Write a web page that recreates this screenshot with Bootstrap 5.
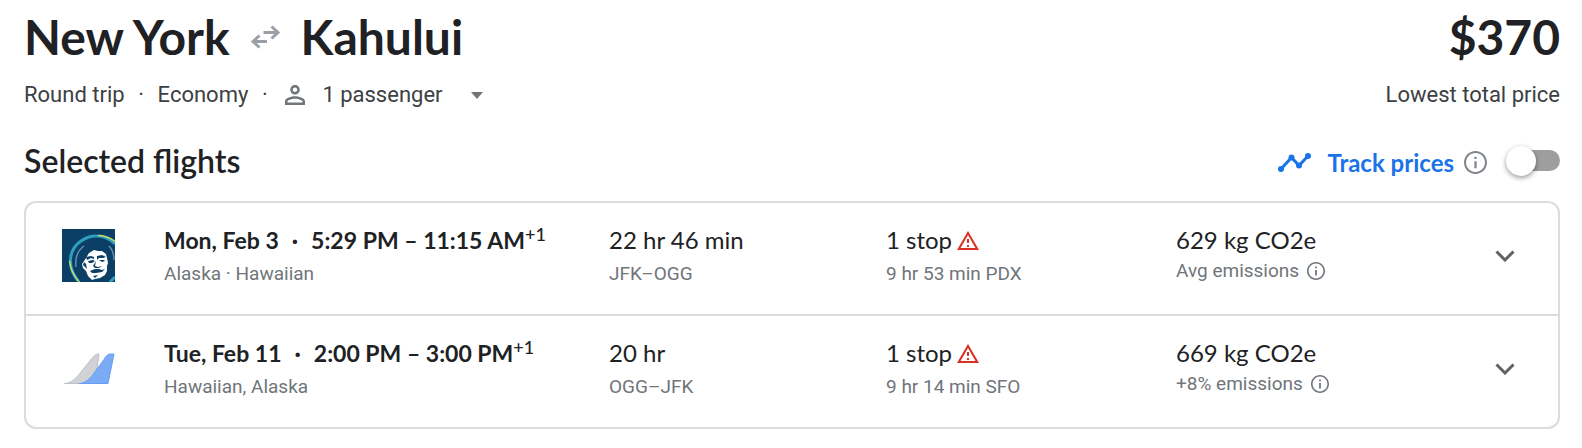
<!DOCTYPE html>
<html lang="en">
<head>
<meta charset="utf-8">
<meta name="viewport" content="width=device-width, initial-scale=1">
<title>New York to Kahului</title>
<link href="https://cdn.jsdelivr.net/npm/bootstrap@5.3.0/dist/css/bootstrap.min.css" rel="stylesheet">
<style>
  body { font-family: Roboto, sans-serif; color: #202124; background: #fff; }
  h1, h2, .price, .main-line, .track { font-family: Lato, sans-serif; }
  .page { padding: 9px 22px 18px 24px; }
  h1, .price { font-size: 48px; line-height: 56px; font-weight: 700; }
  h1 { gap: 20px; }
  h2 { font-size: 32px; line-height: 40px; font-weight: 600; }
  .trip { font-size: 22px; line-height: 32px; color: #3c4043; margin-top: 14px; }
  .dot { width: 33px; text-align: center; }
  .plain { border: 0; background: none; padding: 0; color: inherit; }
  .pax { padding-left: 4px; }
  .pax-count { margin: 0 28px 0 17px; }
  .section-head { margin: 30px 0 20px; }
  .track-row { margin-top: 3px; }
  .track { font-size: 24px; line-height: 32px; font-weight: 700; color: #1a73e8; }
  .about { margin: 0 19px 0 10px; color: #80868b; }
  .flights { border: 2px solid #dadce0; border-radius: 12px; }
  .flight { display: grid; grid-template-columns: 102px 445fr 277fr 290fr 304fr 50px; align-items: center; padding: 21px 28px 27px 36px; }
  .flight + .flight { border-top: 2px solid #dadce0; }
  .main-line { font-size: 24px; line-height: 32px; }
  .stops { gap: 5px; }
  .times { font-size: 23px; font-weight: 700; }
  .times-dot { margin: 0 13px; }
  .times sup { font-size: 18px; line-height: 1; top: -8px; font-weight: 500; }
  .sub-line { font-size: 19px; line-height: 26px; color: #70757a; margin-top: 5px; }
  .emissions .sub-line { margin: 2px 0 3px; }
  .switch { appearance: none; width: 54px; height: 30px; margin: 0 0 4px; position: relative; cursor: pointer; }
  .switch::before { content: ""; position: absolute; inset: 4px 0 5px 3px; border-radius: 11px; background: #9e9e9e; }
  .switch::after { content: ""; position: absolute; left: 0; top: 0; width: 30px; height: 30px; border-radius: 50%; background: #fff; box-shadow: 0 2px 5px rgba(0,0,0,.4); }
  .switch:checked::before { background: #8ab4f8; }
  .switch:checked::after { left: 24px; background: #1a73e8; }
  svg { display: block; flex: none; }
</style>
</head>
<body>
<svg width="0" height="0" class="d-none" aria-hidden="true">
  <symbol id="info" viewBox="2 2 20 20"><path fill="currentColor" d="M11 17h2v-6h-2v6zm1-15C6.480 2 2 6.480 2 12s4.480 10 10 10 10-4.480 10-10S17.520 2 12 2zm0 18.200c-4.530 0-8.200-3.670-8.200-8.200S7.470 3.800 12 3.800s8.200 3.670 8.200 8.200-3.670 8.200-8.200 8.200zM11 9h2V7h-2v2z"/></symbol>
  <symbol id="warn" viewBox="0 0 22 19"><path fill="#d93025" d="M11 0 0 19h22zM11 4l7.500 13h-15zM10 8v4h2V8zM10 14v2h2v-2z"/></symbol>
  <symbol id="chev" viewBox="0 0 20 12"><path fill="none" stroke="#5f6368" stroke-width="3" d="M1.500 1.500 10 10l8.500-8.500"/></symbol>
</svg>
<main class="page container-fluid">
  <header>
    <div class="d-flex justify-content-between">
      <h1 class="d-flex align-items-center mb-0">New York
        <svg width="31" height="24" viewBox="0 0 31 24" role="img" aria-label="and back"><path fill="none" stroke="#9aa0a6" stroke-width="3" d="M13.500 7.500H28M21.500 1.500l6.500 6-6.500 6M17 16.500H3M9.500 10.500l-6.500 6 6.500 6"/></svg>
        Kahului</h1>
      <div class="price">$370</div>
    </div>
    <div class="trip d-flex justify-content-between">
      <div class="d-flex align-items-center">
        <span>Round trip</span><span class="dot">·</span><span>Economy</span><span class="dot">·</span>
        <button type="button" class="plain pax d-flex align-items-center" aria-haspopup="true">
          <svg width="20" height="20" viewBox="4 4 16 16"><path fill="#70757a" d="M12 6c1 0 1.800.8 1.800 1.800S13 9.600 12 9.600s-1.800-.8-1.800-1.800S11 6 12 6m0 9c2.700 0 5.800 1.200 6 2v1H6v-1c.2-.8 3.300-2 6-2m0-11C9.800 4 8.200 5.700 8.200 7.800s1.700 3.800 3.800 3.800 3.800-1.700 3.800-3.800S14.100 4 12 4zm0 9c-2.700 0-8 1.300-8 4v3h16v-3c0-2.700-5.300-4-8-4z"/></svg>
          <span class="pax-count">1 passenger</span>
          <svg width="12" height="7" viewBox="0 0 12 7"><path fill="#70757a" d="M0 0h12L6 7z"/></svg>
        </button>
      </div>
      <div>Lowest total price</div>
    </div>
  </header>
  <div class="section-head d-flex justify-content-between align-items-center">
    <h2 class="mb-0">Selected flights</h2>
    <div class="track-row d-flex align-items-center">
      <svg width="33" height="19" viewBox="0 0 33 19"><g fill="#1a73e8"><path fill="none" stroke="#1a73e8" stroke-width="3" d="M3 16 13.500 4.500l7.500 8L30 3"/><circle cx="3" cy="16" r="3"/><circle cx="13.500" cy="4.500" r="3"/><circle cx="21" cy="12.500" r="3"/><circle cx="30" cy="3" r="3"/></g></svg>
      <label class="track ms-3" for="track">Track prices</label>
      <button type="button" class="plain about" aria-label="About price tracking"><svg width="23" height="23"><use href="#info"/></svg></button>
      <input class="switch" type="checkbox" role="switch" id="track">
    </div>
  </div>
  <section class="flights">
    <article class="flight">
      <svg width="53" height="53" viewBox="0 0 53 53" role="img" aria-label="Alaska Airlines">
        <path fill="#0b3f66" d="M0 0h53v53H0z"/>
        <g fill="none">
          <path stroke="#2f9fc0" stroke-width="3" d="M16 52C5 38 6 21 19 12 30 4 44 6 53 15M53 48l-5 5"/>
          <path stroke="#c3dc6a" stroke-width="1.500" d="M36 6.500c7 0 12 2 17 6M7.500 32c1 8 4 15 10 21"/>
          <path stroke="#5f8fb2" stroke-width="1.500" d="M14 38c-1-8 1-16 8-21M47 17c4 4 5 9 5 14"/>
        </g>
        <path fill="#fff" d="M24 29l3-5 5-3 4 1 4 0 4 3 1 4 1 5-1 3 0 5-2 4-5 3-5 1-3 1-4-4-2-5-3-3-1-4z"/>
        <path fill="#0b3f66" d="M24 28l5-1 3 1 0 2-3-1-4 2zM35 27l5-1 4 2-3 1-4 0-2 2zM26 32l5-1 2 1-3 2-3 0zM37 31l5 0 1 1-3 1zM34 32l-1 5 3 1 4-1-3 2-4 0-2-2zM28 42l5-2 4 0 3 1 3-1-3 3-6 1-4 0zM22 33l2 2 1 5-4-4zM31 47l5-1-3 3z"/>
      </svg>
      <div><div class="main-line times">Mon, Feb 3<span class="times-dot">·</span>5:29 PM – 11:15 AM<sup>+1</sup></div><div class="sub-line">Alaska · Hawaiian</div></div>
      <div><div class="main-line">22 hr 46 min</div><div class="sub-line">JFK–OGG</div></div>
      <div><div class="main-line stops d-flex align-items-center">1 stop <svg width="22" height="19" role="img" aria-label="Long layover"><use href="#warn"/></svg></div><div class="sub-line">9 hr 53 min PDX</div></div>
      <div class="emissions"><div class="main-line">629 kg CO2e</div><div class="sub-line d-flex align-items-center gap-2">Avg emissions <button type="button" class="plain" aria-label="About emissions"><svg width="18" height="18"><use href="#info"/></svg></button></div></div>
      <button type="button" class="plain d-flex justify-content-center py-3" aria-label="Flight details, Mon, Feb 3"><svg width="20" height="12"><use href="#chev"/></svg></button>
    </article>
    <article class="flight">
      <svg width="53" height="53" viewBox="0 0 53 53" role="img" aria-label="Multiple airlines">
        <path fill="#d0d2d6" stroke="#bfc1c5" d="M2 41.500c6 0 11-4 15-9l12-15c3-4 5-5.500 8-5.500l-4 29.500z"/>
        <path fill="#7baaf7" stroke="#669df6" d="M17 41.500c6 0 10-4 14-9l11-15c2-4 4-5.500 7-5.500h3l-6 29.500z"/>
      </svg>
      <div><div class="main-line times">Tue, Feb 11<span class="times-dot">·</span>2:00 PM – 3:00 PM<sup>+1</sup></div><div class="sub-line">Hawaiian, Alaska</div></div>
      <div><div class="main-line">20 hr</div><div class="sub-line">OGG–JFK</div></div>
      <div><div class="main-line stops d-flex align-items-center">1 stop <svg width="22" height="19" role="img" aria-label="Long layover"><use href="#warn"/></svg></div><div class="sub-line">9 hr 14 min SFO</div></div>
      <div class="emissions"><div class="main-line">669 kg CO2e</div><div class="sub-line d-flex align-items-center gap-2">+8% emissions <button type="button" class="plain" aria-label="About emissions"><svg width="18" height="18"><use href="#info"/></svg></button></div></div>
      <button type="button" class="plain d-flex justify-content-center py-3" aria-label="Flight details, Tue, Feb 11"><svg width="20" height="12"><use href="#chev"/></svg></button>
    </article>
  </section>
</main>
<script src="https://cdn.jsdelivr.net/npm/bootstrap@5.3.0/dist/js/bootstrap.bundle.min.js"></script>
</body>
</html>
